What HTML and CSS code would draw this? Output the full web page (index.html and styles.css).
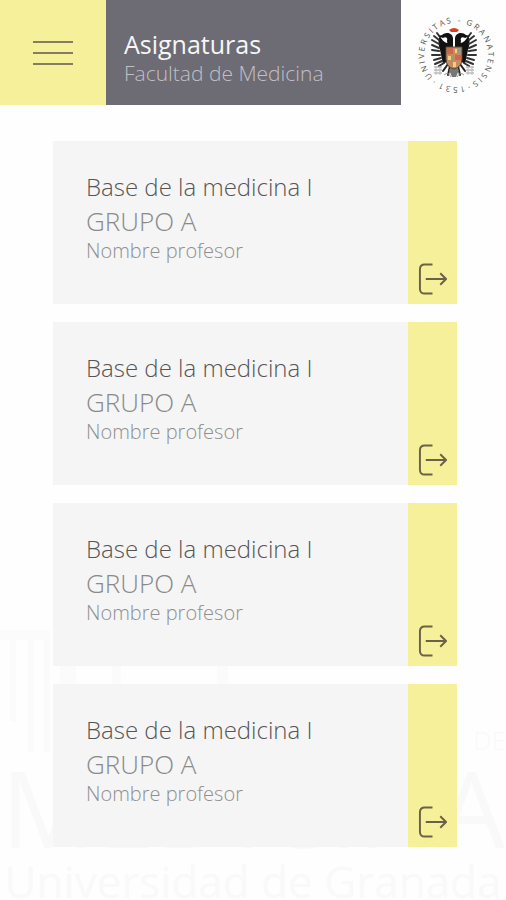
FILE: index.html
```html
<!DOCTYPE html>
<html lang="es">
<head>
    <meta charset="UTF-8">
    <meta name="viewport" content="width=device-width, initial-scale=1.0">
    <title>Asignaturas</title>
    <link rel="stylesheet" href="styles.css">
</head>
<body>
    <!-- Marca de agua del fondo -->
    <div class="watermark" aria-hidden="true">
        <svg class="watermark-building" viewBox="0 0 240 130">
            <path d="M0 8H50V130H44V18H34V130H28V18H16V100H10V18H0Z"/>
            <path d="M60 20H76V80H60ZM112 20H121V80H112ZM217 20H228V80H217Z"/>
        </svg>
        <div class="watermark-de">DE</div>
        <div class="watermark-name">MEDICINA</div>
        <div class="watermark-uni">Universidad de Granada</div>
    </div>

    <header class="header">
        <button class="menu-btn" type="button" aria-label="Menú">
            <span class="menu-line"></span>
            <span class="menu-line"></span>
            <span class="menu-line"></span>
        </button>
        <div class="header-title">
            <h1>Asignaturas</h1>
            <p>Facultad de Medicina</p>
        </div>
        <div class="logo">
            <svg class="logo-seal" viewBox="0 0 80 80">
                <defs>
                    <path id="ring" d="M19.400 64.500A32 32 0 1 1 19.500 64.600"/>
                </defs>
                <text class="logo-text"><textPath href="#ring" startOffset="1">U N I V E R S I T A S</textPath></text>
                <text class="logo-text"><textPath href="#ring" startOffset="77">-</textPath></text>
                <text class="logo-text"><textPath href="#ring" startOffset="85">G R A N A T E N S I S</textPath></text>
                <text class="logo-text"><textPath href="#ring" startOffset="162">·</textPath></text>
                <text class="logo-text"><textPath href="#ring" startOffset="167">1 5 3 1</textPath></text>
                <text class="logo-text"><textPath href="#ring" startOffset="196">·</textPath></text>
                <!-- alas -->
                <g id="ala">
                    <path d="M36 30C31 31 28 27 26 23C24 25 24 31 26 37L29 51L36 47Z" fill="#111"/>
                    <path d="M26 24L23 20M25 27L20 23M25 31L18 27M25 35L18 32M25 38L18 37M26 42L18 42M27 45L20 47M28 48L21 51M30 50L25 53" fill="none" stroke="#333" stroke-width="2" stroke-linecap="round"/>
                    <path d="M39 34V25C38 19 31 19 28 22L24 23L29 25C32 23 34 25 33 28L34 34Z" fill="#111"/>
                    <path d="M34 51L29 58M36 53L34 62M38 54L38 60" stroke="#222" stroke-width="2" stroke-linecap="round"/>
                    <path d="M20 54H28M20 57H28M20 60H28M30 62Q34 58 37 64" fill="none" stroke="#999" stroke-width="1"/>
                    <path d="M22 53V62M26 53V62" stroke="#bbb"/>
                </g>
                <use href="#ala" transform="matrix(-1 0 0 1 80 0)"/>
                <path d="M35 57L40 52L45 57L42 64H38Z" fill="#777"/>
                <!-- corona -->
                <path d="M35 17Q40 13 45 17L43 19H37Z" fill="#d8401f"/>
                <!-- escudo -->
                <path d="M32 34H48V46Q48 54 40 56Q32 54 32 46Z" fill="#c98a5c" stroke="#554238"/>
                <path d="M33 35H39V41H33ZM41 42H47V47H41Z" fill="#cf6650"/>
                <path d="M41 36H43V40H41ZM34 43H37V47H34ZM39 49H42V54H39Z" fill="#efd27e"/>
                <path d="M44 35H47V40H44ZM37 43H39V48H37Z" fill="#9a9589"/>
            </svg>
        </div>
    </header>

    <main class="list">
        <article class="card">
            <div class="card-info">
                <h2>Base de la medicina I</h2>
                <p class="group">GRUPO A</p>
                <p class="teacher">Nombre profesor</p>
            </div>
            <button class="enter-btn" type="button" aria-label="Entrar">
                <svg class="enter-icon" viewBox="0 0 30 32">
                    <path d="M15 1H7Q2 1 2 6V26Q2 31 7 31H15M8 16H29M23 10L29 16L23 22"/>
                </svg>
            </button>
        </article>
        <article class="card">
            <div class="card-info">
                <h2>Base de la medicina I</h2>
                <p class="group">GRUPO A</p>
                <p class="teacher">Nombre profesor</p>
            </div>
            <button class="enter-btn" type="button" aria-label="Entrar">
                <svg class="enter-icon" viewBox="0 0 30 32">
                    <path d="M15 1H7Q2 1 2 6V26Q2 31 7 31H15M8 16H29M23 10L29 16L23 22"/>
                </svg>
            </button>
        </article>
        <article class="card">
            <div class="card-info">
                <h2>Base de la medicina I</h2>
                <p class="group">GRUPO A</p>
                <p class="teacher">Nombre profesor</p>
            </div>
            <button class="enter-btn" type="button" aria-label="Entrar">
                <svg class="enter-icon" viewBox="0 0 30 32">
                    <path d="M15 1H7Q2 1 2 6V26Q2 31 7 31H15M8 16H29M23 10L29 16L23 22"/>
                </svg>
            </button>
        </article>
        <article class="card">
            <div class="card-info">
                <h2>Base de la medicina I</h2>
                <p class="group">GRUPO A</p>
                <p class="teacher">Nombre profesor</p>
            </div>
            <button class="enter-btn" type="button" aria-label="Entrar">
                <svg class="enter-icon" viewBox="0 0 30 32">
                    <path d="M15 1H7Q2 1 2 6V26Q2 31 7 31H15M8 16H29M23 10L29 16L23 22"/>
                </svg>
            </button>
        </article>
    </main>
</body>
</html>
```
FILE: styles.css
```css
* {
    box-sizing: border-box;
}

body {
    position: relative;
    margin: 0;
    min-height: 100vh;
    background-color: #fefefe;
    font-family: "Open Sans", "Noto Sans", sans-serif;
    font-weight: 300;
}

h1, h2, p {
    margin: 0;
    font-weight: 300;
}

button {
    border: none;
    background-color: #f6f09a;
    cursor: pointer;
}

/* Cabecera */
.header {
    display: flex;
    height: 105px;
}

.menu-btn {
    display: flex;
    flex-direction: column;
    justify-content: center;
    align-items: center;
    gap: 9px;
    width: 106px;
    padding: 0;
}

.menu-line {
    width: 40px;
    height: 2px;
    background-color: #857c62;
}

.header-title {
    flex: 1;
    padding: 28px 18px 0;
    background-color: #6d6b74;
}

.header-title h1 {
    font-size: 25px;
    line-height: 32px;
    font-weight: 400;
    color: #f6f6f6;
}

.header-title p {
    font-size: 21px;
    line-height: 26px;
    color: #c0bfc4;
}

.logo {
    display: flex;
    justify-content: center;
    align-items: center;
    width: 105px;
}

.logo-seal {
    width: 80px;
    height: 80px;
    overflow: visible;
}

.logo-text {
    font-size: 8px;
    font-weight: 400;
    fill: #555;
}

/* Lista de asignaturas */
.list {
    position: relative;
    display: flex;
    flex-direction: column;
    gap: 18px;
    padding: 36px 49px 52px 53px;
}

.card {
    display: flex;
    background-color: #f5f5f5;
}

.card-info {
    flex: 1;
    padding: 29px 33px 40px;
}

.card-info h2 {
    font-size: 24px;
    line-height: 34px;
    color: #555;
}

.group {
    font-size: 26px;
    line-height: 34px;
    color: #8a8a8a;
}

.teacher {
    font-size: 20px;
    line-height: 26px;
    color: #8f8f8f;
}

.enter-btn {
    display: flex;
    align-items: flex-end;
    width: 49px;
    padding: 0 10px 9px;
}

.enter-icon {
    width: 30px;
    height: 32px;
    fill: none;
    stroke: #6b6148;
    stroke-width: 2;
}

/* Marca de agua */
.watermark {
    position: absolute;
    left: 0;
    right: 0;
    bottom: 0;
    height: 278px;
    overflow: hidden;
    color: #f9f9f9;
    text-align: center;
    white-space: nowrap;
}

.watermark-building {
    display: block;
    width: 240px;
    height: 130px;
    fill: #fbfbfb;
}

.watermark-de {
    position: absolute;
    top: 102px;
    right: 0;
    font-size: 26px;
    line-height: 32px;
}

.watermark-name {
    font-size: 106px;
    line-height: 110px;
    font-weight: 400;
}

.watermark-uni {
    font-size: 44px;
    line-height: 38px;
    font-weight: 400;
}
```
